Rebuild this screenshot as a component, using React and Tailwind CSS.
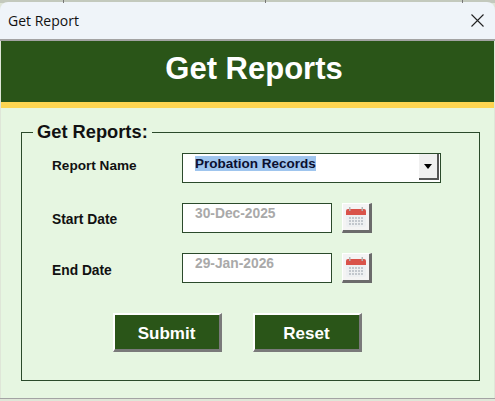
import React from 'react';

const font = { fontFamily: '"Liberation Sans", Arial, sans-serif' };

const CalendarIcon = () => (
  <svg width="22" height="22" viewBox="0 0 22 22">
    <rect x="1" y="3" width="20" height="18" rx="2" fill="#eef0f2" />
    <path d="M1 9V5a2 2 0 0 1 2-2h16a2 2 0 0 1 2 2v4z" fill="#d9534a" />
    <rect x="4" y="1" width="1.5" height="4" fill="#b5b5b5" />
    <rect x="16.5" y="1" width="1.5" height="4" fill="#b5b5b5" />
    <g fill="#c3c8ce">
      {[11, 14, 17].map((y) => [4, 7, 10, 13, 16].map((x) => (
        <rect key={`${x}-${y}`} x={x} y={y} width="2" height="2" />
      )))}
    </g>
  </svg>
);

const CalendarButton = () => (
  <button className="flex h-[30px] w-[30px] items-center justify-center border-t border-l border-white border-r-[3px] border-b-[3px] border-r-[#6b6b6b] border-b-[#6b6b6b] bg-[#f4f4f4]">
    <CalendarIcon />
  </button>
);

const DateRow = ({ label, value, labelPad }) => (
  <div className="flex h-[30px] items-center">
    <span className={`ml-[30px] w-[130px] text-[13.8px] font-bold text-[#111] ${labelPad}`}>{label}</span>
    <div className="h-[30px] w-[150px] border border-[#2b4a2b] bg-white pt-[1px] pl-[12px] text-[13.8px] leading-[18px] font-bold text-[#a9a9a9]">
      {value}
    </div>
    <div className="ml-[10px]">
      <CalendarButton />
    </div>
  </div>
);

const ActionButton = ({ children }) => (
  <button className="h-[39px] w-[109px] border-t-2 border-l-2 border-white border-r-[3px] border-b-[3px] border-r-[#7a7a7a] border-b-[#7a7a7a] bg-[#2a5518] pt-[3px] pr-[1px] text-[17px] font-bold text-white">
    {children}
  </button>
);

export default function App() {
  return (
    <div className="h-[401px] w-[495px] overflow-hidden bg-[#dfe6d8]" style={font}>
      {/* window behind the dialog */}
      <div className="flex h-[3px] bg-[#c3c9bd]">
        <div className="w-[64px] border-r border-[#777]" />
        <div className="w-[202px] border-r border-[#777]" />
        <div className="w-[197px] border-r border-[#777]" />
      </div>
      <div className="-mt-[1px] flex h-[37px] items-center justify-between rounded-t-[8px] bg-[#eff4f9] pr-[11px] pl-[8px]">
        <span className="text-[14px] text-[#111]" style={{ fontFamily: '"Open Sans", sans-serif' }}>Get Report</span>
        <svg width="13" height="13" viewBox="0 0 13 13" stroke="#222" strokeWidth="1.1">
          <path d="M0.5 0.5l12 12M12.5 0.5l-12 12" />
        </svg>
      </div>
      <div className="h-[2px] bg-[#a3a3a3]" />
      <div className="mx-[1px] flex h-[61px] items-center justify-center bg-[#2a5518] pb-[5px] pl-[13px] text-[31px] font-bold text-white">
        Get Reports
      </div>
      <div className="mx-[1px] h-[6px] bg-[#fdd551]" />
      <div className="mx-[1px] h-[290px] bg-[#e6f6e1] pt-[14px] pl-[20px]">
        <fieldset className="h-[259px] w-[459px] border border-[#2b4a2b]">
          <legend className="ml-[11px] px-[4px] text-[18.3px] leading-[20px] font-bold text-[#111]">Get Reports:</legend>
          <div className="mt-[11px] flex h-[30px] items-center">
            <span className="ml-[30px] w-[130px] pb-[3px] text-[13.6px] font-bold text-[#111]">Report Name</span>
            <div className="flex h-[30px] w-[259px] justify-between border border-[#2b4a2b] bg-white pr-[1px] pl-[12px]">
              <span className="mt-[2px] h-[15px] bg-[#9fc5ee] text-[13.5px] leading-[15px] font-bold text-[#0b1030]">Probation Records</span>
              <div className="flex h-[26px] w-[20px] items-center justify-center self-start border-r-[2px] border-b-[2px] border-r-[#555] border-b-[#555] bg-[#f0f0f0]">
                <div className="h-0 w-0 border-x-[4px] border-t-[5px] border-x-transparent border-t-black" />
              </div>
            </div>
          </div>
          <div className="mt-[20px] flex flex-col gap-[20px]">
            <DateRow label="Start Date" value="30-Dec-2025" labelPad="pt-[4px]" />
            <DateRow label="End Date" value="29-Jan-2026" labelPad="pt-[7px]" />
          </div>
          <div className="mt-[30px] ml-[91px] flex gap-[31px]">
            <ActionButton>Submit</ActionButton>
            <ActionButton>Reset</ActionButton>
          </div>
        </fieldset>
      </div>
      <div className="h-[1px] bg-[#a3a3a3]" />
    </div>
  );
}
